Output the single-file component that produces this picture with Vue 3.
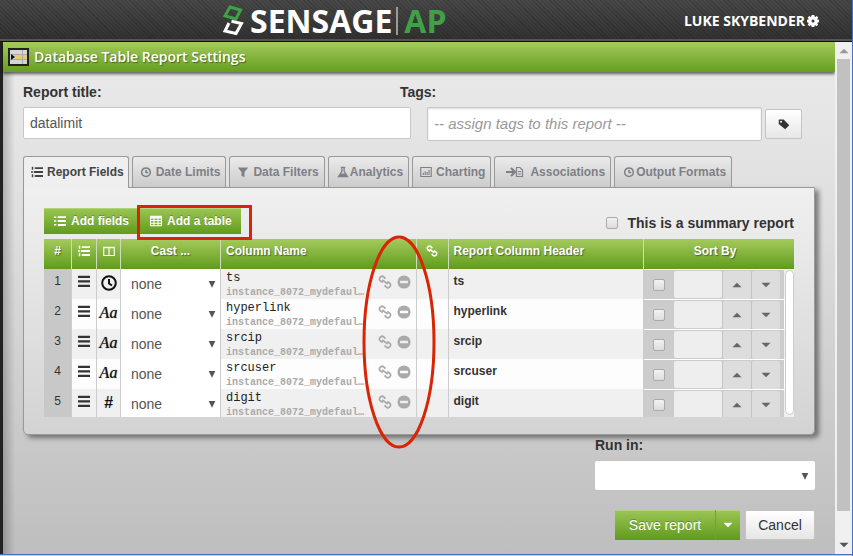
<script setup>
import { h } from 'vue'

const shapes = {
  list: { f: 'M0 2h3v2H0zM0 7h3v2H0zM0 12h3v2H0zM5 1.500h11v2.500H5zM5 6.800h11v2.500H5zM5 12h11v2.500H5z' },
  steps: { f: 'M1 1h2v4H1zM0 7h3v2H0zM1 11h2v4H1zM5 1.500h11v2.500H5zM4 6.800h12v2.500H4zM5 12h11v2.500H5z' },
  bars: { f: 'M0 1h16v3H0zM0 7h16v3H0zM0 13h16v3H0z' },
  clock: { s: 'M8 2.500a5.800 5.800 0 1 0 0 11.600a5.800 5.800 0 1 0 0-11.600M8 5v3.800h3', w: 2 },
  clockBold: { s: 'M8 1.2a6.8 6.8 0 1 0 0 13.6a6.8 6.8 0 1 0 0-13.6M8 4v4.5l3 2', w: 2 },
  funnel: { f: 'M1 2h14L10 8v7l-4-2V8z' },
  flask: { s: 'M5 1.800h6M6.500 2v5L2 14h12L9.500 7V2', f: 'M5 10h6l2.500 4h-11z', w: 1.8 },
  chart: { s: 'M1 2h14v12H1zM4.500 12V9M7 12V7M9.500 12V8M12 12V5', w: 1.5 },
  table: { f: 'M0 1h16v14H0zM1.500 4.500v2.200h3v-2.200zM6 4.500v2.200h4v-2.200zM11.500 4.500v2.200h3v-2.200zM1.500 8v2.200h3V8zM6 8v2.200h4V8zM11.500 8v2.200h3V8zM1.500 11.500v2h3v-2zM6 11.500v2h4v-2zM11.500 11.500v2h3v-2z' },
  columns: { s: 'M1 3h14v11H1zM8 3v11M1 3.500h14', w: 1.5 },
  link: { s: 'M5.500 8.500L2.600 6.500A2.400 2.400 0 0 1 2.200 3L3 2.200A2.600 2.600 0 0 1 6.500 2.200L8.500 4.200M10.500 7.500L13.400 9.500A2.400 2.400 0 0 1 13.800 13L13 13.800A2.600 2.600 0 0 1 9.500 13.800L7.500 11.800M5 5.500L11 10.500', w: 2 },
  minus: { f: 'M8 .5a7.500 7.500 0 1 0 0 15a7.500 7.500 0 1 0 0-15M3.500 6.700h9v2.800h-9z' },
  tag: { f: 'M1 2h6.500l7.500 7.500-5.500 5.500L1 8zM4 3.500a1.400 1.400 0 1 0 0 2.800a1.400 1.400 0 1 0 0-2.800' },
  up: { f: 'M2 11L8 5L14 11z' },
  down: { f: 'M2 5h12L8 11z' },
  caret: { f: 'M3.500 4h9L8 13z' },
  gear: { f: 'M6.200 0h3.600l.3 2.100.9.400 1.800-1.300 2.200 2.200-1.300 1.800.4.900 1.900.3v3.200l-1.900.4-.4.900 1.300 1.800-2.200 2.200-1.800-1.300-.9.400-.3 2H6.200l-.4-2-.9-.4-1.800 1.300-2.200-2.200 1.300-1.800-.4-.9L0 9.600V6.400l1.800-.3.4-.9L.9 3.400l2.200-2.200 1.800 1.300.9-.4zM8 6a2 2 0 1 0 0 4a2 2 0 1 0 0-4' },
}
const Icon = ({ name }) => {
  const s = shapes[name]
  return h('svg', { class: 'icon', viewBox: '0 0 16 16', 'aria-hidden': 'true' }, [
    s.f && h('path', { d: s.f, fill: 'currentColor', 'fill-rule': 'evenodd' }),
    s.s && h('path', { d: s.s, fill: 'none', stroke: 'currentColor', 'stroke-width': s.w }),
  ])
}
Icon.props = ['name']

const tabs = [
  { label: 'Report Fields', icon: 'steps', cls: 'active' },
  { label: 'Date Limits', icon: 'clock' },
  { label: 'Data Filters', icon: 'funnel' },
  { label: 'Analytics', icon: 'flask', cls: 'tight' },
  { label: 'Charting', icon: 'chart' },
  { label: 'Associations', icon: 'assoc', cls: 'assoc' },
  { label: 'Output Formats', icon: 'clock', cls: 'tight' },
]
const rows = [
  { name: 'ts', type: 'clock' },
  { name: 'hyperlink', type: 'Aa' },
  { name: 'srcip', type: 'Aa' },
  { name: 'srcuser', type: 'Aa' },
  { name: 'digit', type: '#' },
]
</script>

<template>
  <div class="app">
    <header class="top">
      <div class="logo">
        <svg class="mark" viewBox="0 0 22 32" aria-hidden="true">
          <path d="M8 2L18.500 5L14 14L3 10.800z" fill="none" stroke="#3fa046" stroke-width="3" />
          <path d="M9.500 16.300L19.500 18.500L14 28.500L3 26L7 18" fill="none" stroke="#fff" stroke-width="3" />
        </svg>
        <span class="word">SENSAGE</span>
        <span class="rule"></span>
        <span class="word ap">AP</span>
      </div>
      <button class="user" type="button">LUKE SKYBENDER <Icon name="gear" /></button>
    </header>

    <div class="body">
      <main class="dialog">
        <div class="titlebar">
          <svg class="sheet" viewBox="0 0 21 18" aria-hidden="true">
            <rect x="1" y="1" width="19" height="16" fill="#d5d5d5" stroke="#222" stroke-width="2" />
            <rect x="7" y="7" width="12" height="4" fill="#eccb6b" />
            <path d="M2 6.500h17M2 11.500h17M14.500 2v14" stroke="#aaa" />
            <path d="M3 6l4 3-4 3z" fill="#111" />
          </svg>
          <h1>Database Table Report Settings</h1>
        </div>

        <form class="content" @submit.prevent>
          <div class="labels">
            <label for="title">Report title:</label>
            <label for="tags">Tags:</label>
          </div>
          <div class="inputs">
            <input id="title" class="text title" type="text" value="datalimit" />
            <input id="tags" class="text tags" type="text" placeholder="-- assign tags to this report --" />
            <button class="plain tagbtn" type="button" aria-label="Choose tags"><Icon name="tag" /></button>
          </div>

          <nav class="tabs">
            <button v-for="t in tabs" :key="t.label" type="button" class="tab" :class="t.cls">
              <svg v-if="t.icon === 'assoc'" class="wide" viewBox="0 0 18 12" aria-hidden="true">
                <path d="M0 6h8M5 2L9 6L5 10" fill="none" stroke="currentColor" stroke-width="2.200" />
                <path d="M10.500 1.500h3.500l2.500 2.500v6.500h-6zM12 5.500h3M12 8h3" fill="none" stroke="currentColor" stroke-width="1.200" />
              </svg>
              <Icon v-else :name="t.icon" />
              <span>{{ t.label }}</span>
            </button>
          </nav>

          <section class="panel">
            <div class="tools">
              <button class="green" type="button"><Icon name="list" />Add fields</button>
              <div class="marked">
                <button class="green" type="button"><Icon name="table" />Add a table</button>
                <span class="box"></span>
              </div>
              <label class="summary"><input class="check" type="checkbox" />This is a summary report</label>
            </div>

            <div class="grid">
              <table>
                <colgroup>
                  <col class="c-num" /><col class="c-drag" /><col class="c-type" /><col class="c-cast" />
                  <col /><col class="c-link" /><col /><col class="c-sort" />
                </colgroup>
                <thead>
                  <tr>
                    <th class="mid">#</th>
                    <th class="mid"><Icon name="steps" /></th>
                    <th class="mid"><Icon name="columns" /></th>
                    <th class="mid">Cast ...</th>
                    <th>Column Name</th>
                    <th class="mid"><Icon name="link" /></th>
                    <th>Report Column Header</th>
                    <th class="mid last">Sort By</th>
                  </tr>
                </thead>
                <tbody>
                  <tr v-for="(r, i) in rows" :key="r.name">
                    <td class="num">{{ i + 1 }}</td>
                    <td class="drag"><Icon name="bars" /></td>
                    <td class="type">
                      <Icon v-if="r.type === 'clock'" name="clockBold" />
                      <span v-else :class="r.type === 'Aa' ? 'alpha' : 'hash'">{{ r.type }}</span>
                    </td>
                    <td class="cast">
                      <div class="pick">
                        <select :aria-label="'Cast ' + r.name"><option>none</option></select>
                        <Icon name="caret" />
                      </div>
                    </td>
                    <td>
                      <div class="name">
                        <div class="names">
                          <div class="field">{{ r.name }}</div>
                          <div class="source">instance_8072_mydefaul…</div>
                        </div>
                        <button type="button" aria-label="Link"><Icon name="link" /></button>
                        <button type="button" aria-label="Remove"><Icon name="minus" /></button>
                      </div>
                    </td>
                    <td></td>
                    <td class="head">{{ r.name }}</td>
                    <td class="last">
                      <div class="sort">
                        <input class="check" type="checkbox" :aria-label="'Sort by ' + r.name" />
                        <input class="order" type="text" :aria-label="'Sort order ' + r.name" />
                        <button type="button" aria-label="Ascending"><Icon name="up" /></button>
                        <button type="button" aria-label="Descending"><Icon name="down" /></button>
                      </div>
                    </td>
                  </tr>
                </tbody>
              </table>
              <span class="thumb"></span>
            </div>
          </section>

          <footer class="foot">
            <label for="run">Run in:</label>
            <div class="pick run">
              <select id="run"></select>
              <Icon name="caret" />
            </div>
            <div class="actions">
              <div class="split">
                <button class="green save" type="submit">Save report</button>
                <button class="green more" type="button" aria-label="More save options"><Icon name="down" /></button>
              </div>
              <button class="plain cancel" type="button">Cancel</button>
            </div>
          </footer>
        </form>
      </main>
      <div class="scroll">
        <Icon name="up" />
        <span class="bar"></span>
        <Icon name="down" />
      </div>
    </div>
    <div class="strip"></div>
    <svg class="ring" viewBox="0 0 74 214" aria-hidden="true">
      <ellipse cx="37" cy="107" rx="35" ry="105" fill="none" stroke="#d92405" stroke-width="3" />
    </svg>
  </div>
</template>

<style>
body { margin: 0; background: #222; }
.icon { width: 12px; height: 12px; flex: none; display: block; }
</style>

<style scoped>
* { box-sizing: border-box; }
.app {
  position: relative;
  display: flex;
  flex-direction: column;
  min-height: 100vh;
  border-right: 1px solid #4472c4;
  font: 14px/20px "Liberation Sans", sans-serif;
  color: #333;
}
button, input, select { font: inherit; color: inherit; margin: 0; }
button { padding: 0; border: 0; background: none; cursor: pointer; }

.top {
  display: flex;
  align-items: center;
  justify-content: space-between;
  height: 42px;
  padding: 0 33px 0 222px;
  border-bottom: 1px solid #111;
  box-shadow: inset 0 -2px #555;
  background:
    repeating-linear-gradient(45deg, rgba(0, 0, 0, .12) 0 1px, transparent 1px 3px),
    linear-gradient(#484848, #303030);
}
.logo { display: flex; align-items: center; }
.mark { width: 22px; height: 32px; margin-right: 6px; }
.word { font: bold 32px/38px "Open Sans", sans-serif; color: #fff; }
.ap { color: #3fa046; }
.rule { width: 2px; height: 28px; margin: 0 6px 0 4px; background: #999; }
.user {
  display: flex;
  align-items: center;
  gap: 2px;
  font: bold 14px/20px "Open Sans", sans-serif;
  color: #fff;
}

.body { flex: 1; display: flex; padding-left: 3px; background: #222; }
.dialog {
  flex: 1;
  min-width: 0;
  background:
    linear-gradient(90deg, rgba(0, 0, 0, .22), transparent 12px),
    linear-gradient(#ebebeb, #dedede 35%, #bebebe);
}
.titlebar {
  display: flex;
  align-items: center;
  gap: 5px;
  height: 30px;
  padding-left: 5px;
  background: linear-gradient(#a4ca5c, #659e1f);
  box-shadow: 0 2px 3px rgba(0, 0, 0, .6);
}
.sheet { width: 21px; height: 18px; }
h1 {
  margin: 0;
  font: 600 14px/20px "Open Sans", sans-serif;
  color: #fff;
  text-shadow: 1px 1px 1px rgba(0, 0, 0, .4);
}
.content { padding: 10px 20px 14px; }
.labels { display: flex; font-weight: bold; }
.labels label:first-child { width: 47.6%; }
.inputs { display: flex; margin-top: 5px; padding-right: 13px; }
.text {
  height: 32px;
  padding: 0 6px;
  border: 1px solid #c8c8c8;
  border-radius: 2px;
  background: #fff;
  color: #555;
  outline: 0;
}
.title { margin-right: 16px; flex: 0 1 388px; min-width: 0; }
.tags { flex: 1; min-width: 0; height: 34px; box-shadow: inset 0 1px 2px rgba(0, 0, 0, .15); }
.tags::placeholder { color: #999; font-style: italic; font-size: 15px; opacity: 1; }
.plain {
  display: flex;
  align-items: center;
  justify-content: center;
  height: 30px;
  border: 1px solid #c4c4c4;
  border-radius: 2px;
  background: linear-gradient(#fff, #e6e6e6);
}
.tagbtn { width: 37px; margin: 2px 0 0 3px; }

.tabs { display: flex; gap: 3px; margin-top: 15px; height: 31px; position: relative; z-index: 1; }
.tab {
  display: flex;
  align-items: center;
  gap: 4px;
  height: 31px;
  padding: 0 5px 0 7px;
  border: 1px solid #999;
  border-bottom: 0;
  border-radius: 3px 3px 0 0;
  background: linear-gradient(#ebebeb, #cbcbcb);
  font-weight: bold;
  font-size: 12px;
  color: #7d8087;
  white-space: nowrap;
}
.tab.active { height: 32px; padding-right: 4px; padding-bottom: 2px; background: #efefef; color: #444; }
.tab.tight { gap: 1px; padding-left: 8px; }
.tab.assoc { padding-left: 11px; gap: 6px; }
.wide { width: 18px; height: 12px; }

.panel {
  padding: 20px 20px 17px;
  border: 1px solid #999;
  border-radius: 0 0 5px 5px;
  background: linear-gradient(#f0f0f0, #d3d3d3);
  box-shadow: 4px 3px 5px rgba(0, 0, 0, .45);
}
.tools { display: flex; gap: 2px; height: 26px; margin-bottom: 5px; }
.green {
  display: flex;
  align-items: center;
  justify-content: center;
  gap: 5px;
  height: 26px;
  padding: 0 9px 0 10px;
  background: linear-gradient(#9cc655, #609b1c);
  box-shadow: inset 0 1px #b2d37a;
  color: #fff;
  font-weight: bold;
  font-size: 12px;
  text-shadow: 0 -1px rgba(0, 0, 0, .25);
  white-space: nowrap;
}
.marked { position: relative; }
.box {
  position: absolute;
  z-index: 2;
  top: -3px;
  right: -11px;
  bottom: -6px;
  left: -3px;
  border: 3px solid #d92405;
  pointer-events: none;
}
.summary { display: flex; align-items: center; gap: 9px; margin-left: auto; padding-top: 4px; font-weight: bold; }
.check {
  appearance: none;
  flex: none;
  width: 12px;
  height: 12px;
  border: 1px solid #aaa;
  border-radius: 2px;
  background: linear-gradient(#f2f2f2, #dcdcdc);
}

.grid { position: relative; max-height: 178px; overflow: hidden; background: #ddd; }
table { width: 100%; table-layout: fixed; border-collapse: separate; border-spacing: 0; }
.c-num { width: 28px; }
.c-drag { width: 25px; }
.c-type { width: 24px; }
.c-cast { width: 100px; }
.c-link { width: 32px; }
.c-sort { width: 150px; }
thead tr { background: linear-gradient(#a4ca5c, #609b1c); }
th {
  height: 30px;
  padding: 0 0 6px 5px;
  border-right: 1px solid #cfdcbb;
  color: #fff;
  font-size: 12px;
  line-height: 16px;
  text-align: left;
  text-shadow: 1px 1px 1px rgba(0, 0, 0, .4);
}
th.mid { padding-left: 0; text-align: center; }
th.last { padding-right: 8px; }
th .icon { margin: 0 auto; }
td { height: 30px; padding: 0; border-right: 1px solid #ccc; vertical-align: top; }
.last { border-right: 0; }
tbody tr { background: #f0f0f0; }
tbody tr:nth-child(even) { background: #fdfdfd; }
.num { background: #c8c8c8; text-align: center; font-size: 12px; line-height: 24px; }
.drag .icon { margin: 6px auto 0; }
.type { text-align: center; color: #111; }
.type .icon { width: 16px; height: 16px; margin: 6px auto 0; }
.alpha { font: italic 16px/28px "Liberation Serif", serif; text-shadow: 0 0 1px #555; }
.hash { font: italic bold 16px/28px "Liberation Sans", sans-serif; }
.cast { background: #fff; }
.pick { position: relative; display: flex; align-items: center; background: #fff; }
.pick select {
  appearance: none;
  width: 100%;
  height: 30px;
  padding: 0 10px;
  border: 0;
  background: transparent;
  color: #555;
}
.pick .icon { position: absolute; right: 2px; color: #555; pointer-events: none; }
.name { display: flex; gap: 5px; padding: 1px 5px 0 5px; color: #aaa; }
.name button { padding-top: 4px; height: 20px; width: 14px; }
.name .icon { width: 14px; height: 14px; }
.names { flex: 0 1 140px; margin-right: auto; min-width: 0; font-family: "Liberation Mono", monospace; }
.field { font-size: 12px; line-height: 16px; color: #222; }
.source { overflow: hidden; font-weight: bold; font-size: 10px; line-height: 14px; height: 13px; text-overflow: ellipsis; white-space: nowrap; }
.head { padding-left: 5px; font-weight: bold; font-size: 12px; line-height: 24px; }
.sort {
  display: flex;
  align-items: center;
  height: 30px;
  margin-right: 10px;
  padding: 0 4px 0 9px;
  border-top: 1px solid #fff;
  background: #ccc;
}
.order { flex: 1; min-width: 0; height: 27px; margin-left: 9px; border: 0; border-radius: 2px; background: #eee; }
.sort button {
  display: flex;
  align-items: center;
  justify-content: center;
  width: 29px;
  height: 28px;
  border-left: 1px solid #c4c4c4;
  border-radius: 2px;
  background: #ddd;
  color: #666;
}
.thumb {
  position: absolute;
  top: 31px;
  right: 0;
  bottom: 2px;
  width: 9px;
  border: 1px solid #ccc;
  border-radius: 5px;
  background: #fff;
}

.foot { display: flex; flex-direction: column; width: 220px; margin-left: auto; }
.foot label { font-weight: bold; }
.run { margin-top: 6px; border-radius: 2px; height: 29px; }
.run .icon { right: 4px; }
.actions { display: flex; gap: 5px; justify-content: flex-end; margin-top: 20px; }
.split { display: flex; }
.save { width: 100px; height: 30px; padding: 0; font-weight: normal; font-size: 14px; }
.more { width: 25px; height: 30px; padding: 0; border-left: 1px solid #6fa52f; }
.cancel { width: 70px; }

.scroll {
  display: flex;
  flex-direction: column;
  align-items: center;
  gap: 2px;
  width: 17px;
  padding: 3px 0;
  background: #f0f0f0;
  color: #555;
}
.scroll .icon:first-child { color: #999; }
.bar { width: 13px; flex: 1; margin-bottom: 26px; background: #c1c1c1; }
.strip { height: 3px; border-top: 1px solid #4472c4; background: #ccc; }
.ring { position: absolute; left: 362px; top: 235px; width: 74px; height: 214px; pointer-events: none; }
</style>
